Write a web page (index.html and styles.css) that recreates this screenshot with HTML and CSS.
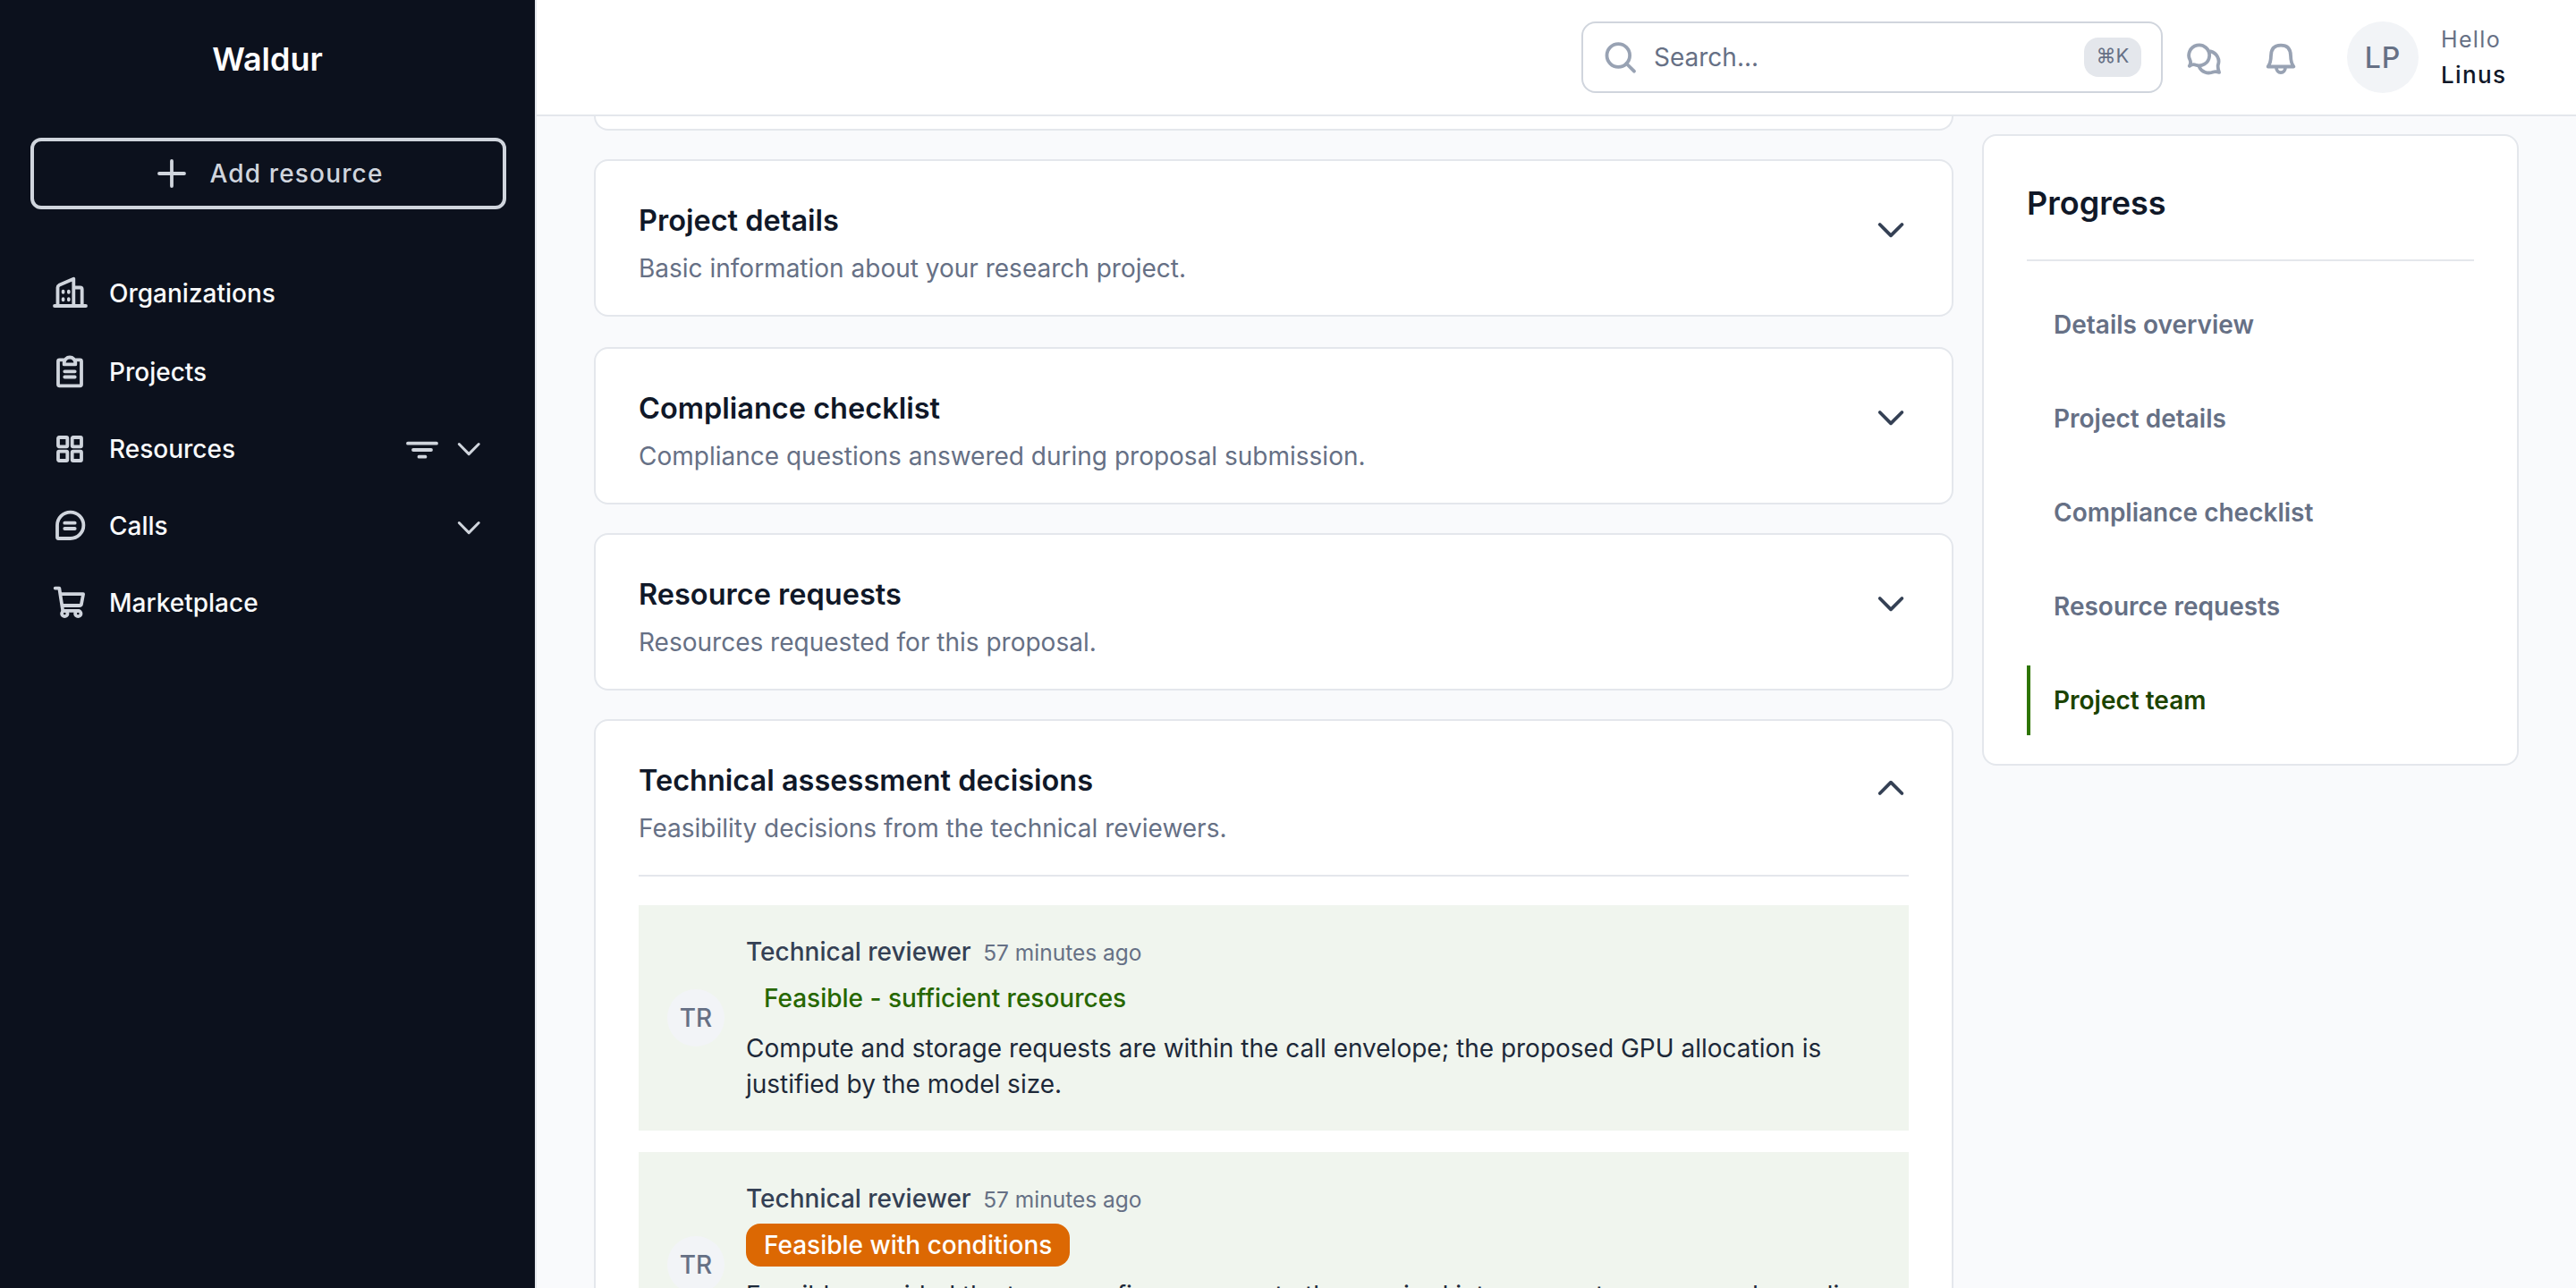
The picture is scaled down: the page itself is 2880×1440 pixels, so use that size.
FILE: index.html
```html
<!DOCTYPE html>
<html lang="en">
<head>
    <meta charset="UTF-8">
    <meta name="viewport" content="width=device-width, initial-scale=1.0">
    <title>Waldur</title>
    <link rel="stylesheet" href="styles.css">
</head>
<body>
    <aside class="sidebar">
        <div class="brand">Waldur</div>
        <button class="add-resource">
            <svg class="icon" viewBox="0 0 40 40"><path d="M20 6v28M6 20h28"/></svg>
            <span>Add resource</span>
        </button>
        <nav class="menu">
            <a class="menu-item first">
                <svg class="icon" viewBox="0 0 40 40">
                    <path d="M3 34h35M6.5 34V13.5q0-1.8 1.6-2.7L24.3 3.8V34M24.3 13.5h7.4q2 0 2 2V34"/>
                    <path class="windows" d="M12.6 17.6v1.4M18.8 17.6v1.4M12.6 26v1.4M18.8 26v1.4"/>
                </svg>
                <span>Organizations</span>
            </a>
            <a class="menu-item">
                <svg class="icon" viewBox="0 0 40 40">
                    <path d="M14 6.3H8.5q-1.5 0-1.5 1.5v26q0 1.5 1.5 1.5h23q1.5 0 1.5-1.5v-26q0-1.5-1.5-1.5H26M13.7 11.4V9.8a6.3 6.3 0 0 1 12.6 0v1.6zM14.3 19.3h11.4M14.3 25.5h11.4"/>
                </svg>
                <span>Projects</span>
            </a>
            <a class="menu-item">
                <svg class="icon" viewBox="0 0 40 40">
                    <rect x="7" y="7" width="10.3" height="10.3" rx="1"/>
                    <rect x="22.7" y="7" width="10.3" height="10.3" rx="1"/>
                    <rect x="7" y="22.7" width="10.3" height="10.3" rx="1"/>
                    <rect x="22.7" y="22.7" width="10.3" height="10.3" rx="1"/>
                </svg>
                <span>Resources</span>
                <div class="menu-actions">
                    <svg class="icon" viewBox="0 0 40 40"><path d="M4 13.7h32M10 21h20M16.5 28.7h7"/></svg>
                    <svg class="icon caret" viewBox="0 0 40 40"><path d="M9.3 14.5L20.2 25.6 31.2 14.5"/></svg>
                </div>
            </a>
            <a class="menu-item">
                <svg class="icon" viewBox="0 0 40 40">
                    <path d="M20.7 34H7.2Q6 34 6 32.8V19.3A14.7 14.7 0 1 1 20.7 34zM14.3 16.7h11.4M14.3 23h11.4"/>
                </svg>
                <span>Calls</span>
                <div class="menu-actions low">
                    <svg class="icon caret" viewBox="0 0 40 40"><path d="M9.3 14.5L20.2 25.6 31.2 14.5"/></svg>
                </div>
            </a>
            <a class="menu-item">
                <svg class="icon" viewBox="0 0 40 40">
                    <path d="M3.7 3.6h4.6l3.9 25.2M9.5 10.2h25.6L33 21.4q-.3 1.6-2 1.6H11.6M12.2 28.8h17"/>
                    <circle cx="14.3" cy="32" r="3.2"/>
                    <circle cx="29.3" cy="32" r="3.2"/>
                </svg>
                <span>Marketplace</span>
            </a>
        </nav>
    </aside>

    <div class="page">
        <header class="topbar">
            <div class="search">
                <svg class="icon" viewBox="0 0 40 40"><circle cx="19.3" cy="18" r="12.8"/><path d="M28.3 27L37 35.7"/></svg>
                <span class="placeholder">Search...</span>
                <kbd>⌘K</kbd>
            </div>
            <svg class="icon chat" viewBox="0 0 40 40">
                <path d="M3.8 29.8q2-3.2.9-6.2A11.5 11.5 0 1 1 10.3 28.5q-2.6-1.2-6.5 1.3z"/>
                <path d="M27.3 13.4C34.5 15.5 38.2 22 35.8 28.6q-.6 2.6 1.2 8.3-3.5-1.2-6.5-.4C24 39 17.5 36.500 15 31.2"/>
            </svg>
            <svg class="icon bell" viewBox="0 0 40 40">
                <path d="M5.7 30.500Q8.800 26.500 9 18 9.300 6.700 20 6.700T31 18Q31.200 26.500 34.300 30.500zM15 31.500a5 5.700 0 0 0 10 0"/>
            </svg>
            <div class="avatar">LP</div>
            <div class="user">
                <div class="hello">Hello</div>
                <div class="name">Linus</div>
            </div>
        </header>

        <main class="content">
            <div class="cards">
                <section class="card card-tail"></section>
                <section class="card">
                    <div class="card-head">
                        <div>
                            <h3>Project details</h3>
                            <p>Basic information about your research project.</p>
                        </div>
                        <svg class="icon toggle" viewBox="0 0 40 40"><path d="M7.7 15L20 27.3 32.4 15"/></svg>
                    </div>
                </section>
                <section class="card spaced">
                    <div class="card-head">
                        <div>
                            <h3>Compliance checklist</h3>
                            <p>Compliance questions answered during proposal submission.</p>
                        </div>
                        <svg class="icon toggle" viewBox="0 0 40 40"><path d="M7.7 15L20 27.3 32.4 15"/></svg>
                    </div>
                </section>
                <section class="card">
                    <div class="card-head">
                        <div>
                            <h3>Resource requests</h3>
                            <p>Resources requested for this proposal.</p>
                        </div>
                        <svg class="icon toggle" viewBox="0 0 40 40"><path d="M7.7 15L20 27.3 32.4 15"/></svg>
                    </div>
                </section>
                <section class="card">
                    <div class="card-head open">
                        <div>
                            <h3>Technical assessment decisions</h3>
                            <p>Feasibility decisions from the technical reviewers.</p>
                        </div>
                        <svg class="icon toggle" viewBox="0 0 40 40"><path d="M7.7 25L20 12.7 32.4 25"/></svg>
                    </div>
                    <div class="reviews">
                        <div class="review">
                            <div class="avatar small">TR</div>
                            <div class="review-body">
                                <div class="reviewer">Technical reviewer <time>57 minutes ago</time></div>
                                <div class="badge success">Feasible - sufficient resources</div>
                                <p>Compute and storage requests are within the call envelope; the proposed GPU allocation is justified by the model size.</p>
                            </div>
                        </div>
                        <div class="review">
                            <div class="avatar small">TR</div>
                            <div class="review-body">
                                <div class="reviewer">Technical reviewer <time>57 minutes ago</time></div>
                                <div class="badge warning">Feasible with conditions</div>
                                <p>Feasible provided the team confirms access to the required interconnect resources, depending on the final schedule.</p>
                            </div>
                        </div>
                    </div>
                </section>
            </div>

            <aside class="progress">
                <h2>Progress</h2>
                <ul>
                    <li>Details overview</li>
                    <li>Project details</li>
                    <li>Compliance checklist</li>
                    <li>Resource requests</li>
                    <li class="active">Project team</li>
                </ul>
            </aside>
        </main>
    </div>
</body>
</html>
```
FILE: styles.css
```css
* {
    box-sizing: border-box;
    margin: 0;
    padding: 0;
}

body {
    display: flex;
    height: 100vh;
    overflow: hidden;
    font-family: Inter, "Noto Sans", sans-serif;
    font-size: 28px;
    line-height: 40px;
    color: #1d2939;
    background-color: #f9fafc;
}

.icon {
    flex: none;
    width: 40px;
    height: 40px;
    fill: none;
    stroke: currentColor;
    stroke-width: 3.8;
    stroke-linecap: round;
    stroke-linejoin: round;
}

/* sidebar */
.sidebar {
    flex: none;
    width: 600px;
    background-color: #0c111d;
    border-right: 2px solid #e4e7ec;
    color: #d0d5dd;
}

.brand {
    height: 154px;
    padding-top: 46px;
    text-align: center;
    font-size: 36px;
    font-weight: 600;
    color: #fff;
}

.add-resource {
    display: flex;
    align-items: center;
    justify-content: center;
    gap: 23px;
    width: 532px;
    height: 80px;
    margin-left: 34px;
    border: 4px solid #d0d5dd;
    border-radius: 12px;
    background: none;
    color: #d0d5dd;
    font: 500 28px Inter, sans-serif;
    letter-spacing: 1.15px;
}

.menu {
    padding-top: 51px;
}

.menu-item {
    display: flex;
    align-items: center;
    gap: 24px;
    height: 86px;
    padding: 0 54px 0 58px;
    font-weight: 500;
}

.menu-item.first {
    margin-bottom: 2px;
}

.menu-item span {
    color: #f9fafb;
}

.windows {
    stroke-width: 3.6;
}

.menu-actions {
    display: flex;
    gap: 12px;
    margin-left: auto;
}

.menu-actions.low {
    padding-top: 4px;
}

.caret {
    stroke-width: 3;
}

/* top bar */
.page {
    flex: 1;
    display: flex;
    flex-direction: column;
    min-width: 0;
}

.topbar {
    flex: none;
    display: flex;
    align-items: center;
    justify-content: flex-end;
    height: 130px;
    padding-right: 60px;
    background-color: #fff;
    border-bottom: 2px solid #e4e7ec;
    color: #98a2b3;
}

.search {
    display: flex;
    align-items: center;
    width: 650px;
    height: 80px;
    padding: 0 22px 0 20px;
    border: 2px solid #d0d5dd;
    border-radius: 16px;
}

.placeholder {
    flex: 1;
    margin-left: 19px;
    color: #667085;
}

kbd {
    width: 64px;
    height: 44px;
    border-radius: 16px;
    background-color: #e4e7ec;
    color: #667085;
    font: 22px/40px Inter, sans-serif;
    text-align: center;
}

.chat {
    margin-left: 26px;
}

.bell {
    margin-left: 46px;
}

.avatar {
    flex: none;
    width: 80px;
    height: 80px;
    margin-left: 54px;
    border-radius: 50%;
    background-color: #f2f4f7;
    color: #667085;
    font-size: 32px;
    font-weight: 500;
    line-height: 82px;
    letter-spacing: 1px;
    text-align: center;
}

.avatar.small {
    width: 64px;
    height: 64px;
    margin-left: 0;
    font-size: 28px;
    line-height: 64px;
    letter-spacing: 0;
}

.user {
    width: 91px;
    margin: 0 0 1px 25px;
    letter-spacing: 1.35px;
}

.hello {
    font-size: 25px;
    color: #667085;
}

.name {
    font-size: 26px;
    font-weight: 500;
    color: #101828;
}

/* content */
.content {
    flex: 1;
    display: flex;
    align-items: flex-start;
    gap: 32px;
    min-height: 0;
    padding: 0 64px;
    overflow: hidden;
}

.cards {
    flex: 1;
    display: flex;
    flex-direction: column;
    gap: 32px;
}

.card {
    border: 2px solid #e4e7ec;
    border-radius: 16px;
    background-color: #fff;
    padding: 0 48px;
}

.card-tail {
    height: 16px;
    border-top: none;
    border-radius: 0 0 16px 16px;
}

.card.spaced {
    margin-top: 2px;
}

.card-head {
    display: flex;
    justify-content: space-between;
    height: 172px;
    padding-top: 46px;
}

.card-head.open {
    height: 174px;
    border-bottom: 2px solid #e4e7ec;
}

.card h3 {
    padding-top: 1px;
    font-size: 32.5px;
    font-weight: 600;
    color: #101828;
}

.card-head p {
    margin-top: 12px;
    line-height: 42px;
    color: #667085;
}

.toggle {
    margin-top: 10px;
    color: #344054;
}

.reviews {
    display: flex;
    flex-direction: column;
    gap: 24px;
    padding: 32px 0;
}

.review {
    display: flex;
    align-items: center;
    gap: 24px;
    padding: 32px;
    background-color: #f0f5ee;
}

.reviewer {
    font-weight: 500;
    color: #344054;
}

.reviewer time {
    margin-left: 6px;
    font-size: 24.5px;
    font-weight: 400;
    line-height: 1;
    color: #667085;
}

.badge {
    width: fit-content;
    height: 48px;
    margin: 8px 0 12px;
    padding: 0 20px;
    border-radius: 16px;
    font-weight: 500;
    line-height: 48px;
}

.badge.success {
    color: #276700;
}

.badge.warning {
    background-color: #dc6803;
    color: #fff;
}

/* progress */
.progress {
    flex: none;
    width: 600px;
    margin-top: 20px;
    padding: 0 48px 32px;
    border: 2px solid #e4e7ec;
    border-radius: 16px;
    background-color: #fff;
}

.progress h2 {
    height: 140px;
    padding-top: 53px;
    border-bottom: 2px solid #e4e7ec;
    font-size: 36px;
    font-weight: 600;
    line-height: 44px;
    color: #101828;
}

.progress ul {
    display: flex;
    flex-direction: column;
    gap: 27px;
    padding-top: 32px;
    list-style: none;
}

.progress li {
    height: 78px;
    padding-left: 26px;
    border-left: 4px solid transparent;
    font-weight: 600;
    line-height: 79px;
    color: #667085;
}

.progress li.active {
    border-left-color: #2e7500;
    color: #1b4300;
}
```
